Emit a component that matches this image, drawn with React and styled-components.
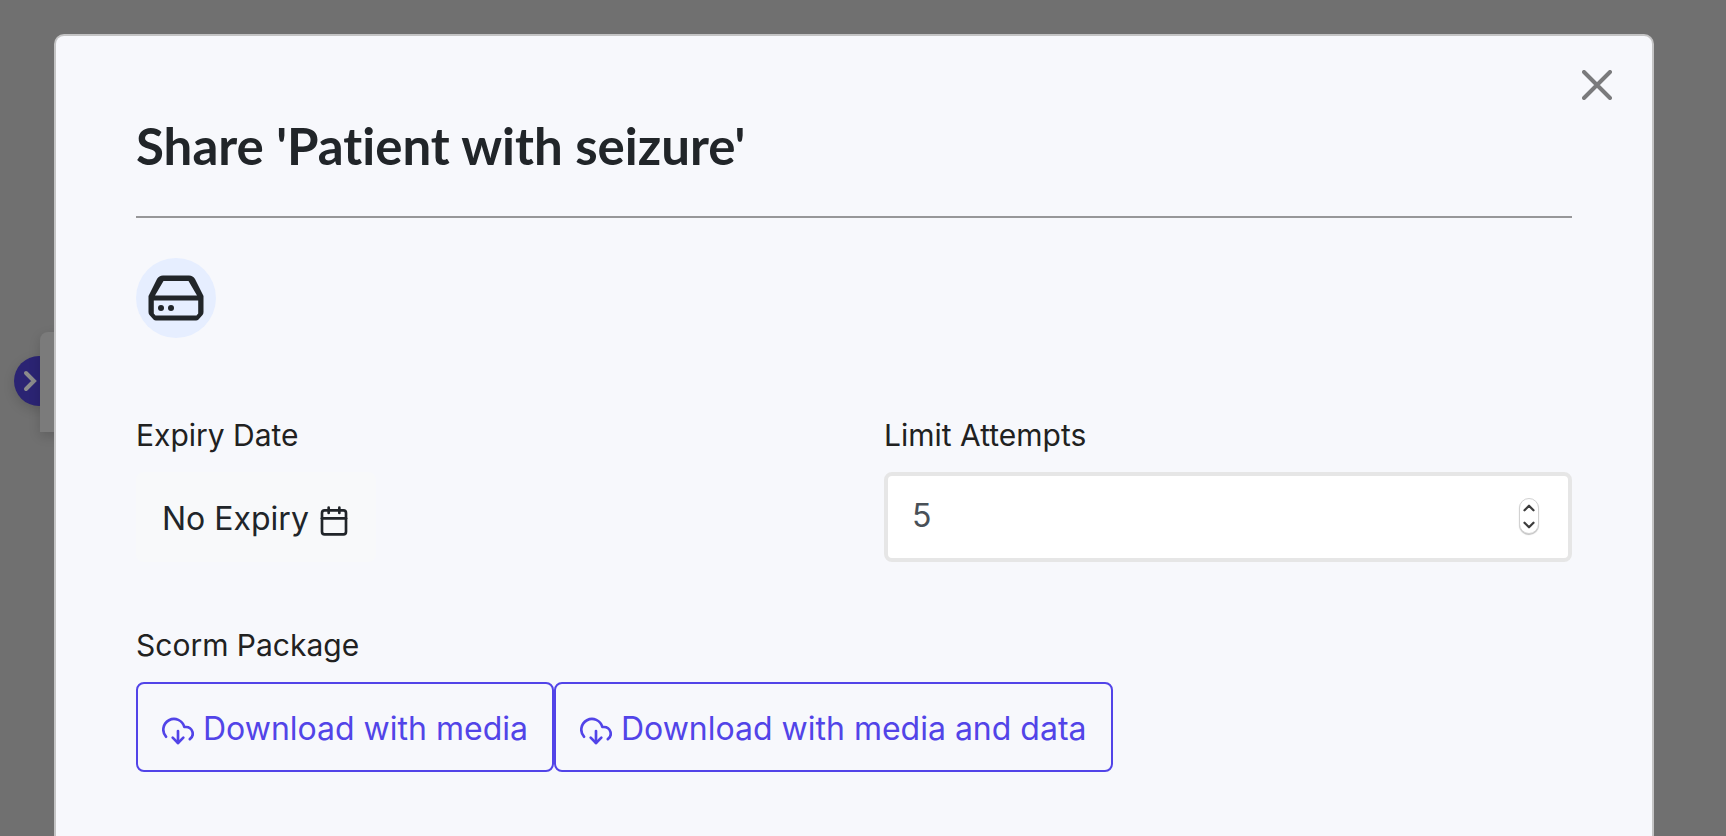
import React, { useState } from "react";
import styled, { createGlobalStyle } from "styled-components";
import { FiCalendar, FiChevronDown, FiChevronUp, FiDownloadCloud } from "react-icons/fi";

const GlobalStyle = createGlobalStyle`
  *, *::before, *::after { box-sizing: border-box; }
  body {
    margin: 0;
    background: #707070;
    color: #212529;
    font-family: Inter, "Liberation Sans", sans-serif;
  }
  button, input { font: inherit; }
`;

const Backdrop = styled.div`
  position: relative;
  min-height: 100vh;
  display: flex;
  padding: 34px 72px 0 54px;
  background: #707070;
  overflow: hidden;
`;

const DrawerToggle = styled.button`
  position: absolute;
  left: 14px;
  top: 356px;
  width: 50px;
  height: 50px;
  display: flex;
  align-items: center;
  padding: 0 0 0 8px;
  border: 0;
  border-radius: 50%;
  background: #2b2473;
  box-shadow: 0 4px 12px rgba(0, 0, 0, 0.15);
`;

const DrawerPanel = styled.div`
  position: absolute;
  left: 40px;
  top: 332px;
  width: 60px;
  height: 100px;
  border-radius: 8px 0 0 0;
  background: #7b7b7b;
  box-shadow: 0 4px 12px rgba(0, 0, 0, 0.15);
`;

const Dialog = styled.main`
  position: relative;
  flex: 1;
  padding: 80px 80px 62px;
  border: 2px solid #c4c4c5;
  border-bottom: 0;
  border-radius: 10px 10px 0 0;
  background: #f7f8fc;
`;

const CloseButton = styled.button`
  position: absolute;
  top: 28px;
  right: 34px;
  width: 42px;
  height: 42px;
  display: grid;
  place-items: center;
  padding: 0;
  border: 0;
  background: none;
  color: #7a7a7c;
`;

const Header = styled.header`
  padding-bottom: 40px;
  border-bottom: 2px solid #979799;
`;

const Title = styled.h1`
  margin: 0;
  font: bold 51px/60px Lato, "Liberation Sans", sans-serif;
  font-variant-ligatures: none;
`;

const DriveBadge = styled.div`
  width: 80px;
  height: 80px;
  margin: 40px 0 76px;
  display: grid;
  place-items: center;
  border-radius: 50%;
  background: #e6eeff;
`;

const Fields = styled.div`
  display: grid;
  grid-template-columns: 1fr 1fr;
  column-gap: 60px;
  row-gap: 62px;
`;

const Field = styled.div`
  grid-column: ${({ $wide }) => ($wide ? "1 / -1" : "auto")};
`;

const labelText = `
  display: block;
  margin-bottom: 16px;
  color: #212121;
  font-size: 30px;
  line-height: 42px;
`;

const Label = styled.label`
  ${labelText}
`;

const GroupLabel = styled.div`
  ${labelText}
`;

const Button = styled.button`
  height: 90px;
  padding: 4px 24px 0;
  border: 2px solid ${({ $outline }) => ($outline ? "#5244e8" : "#f8f9fa")};
  border-radius: 8px;
  background: ${({ $outline }) => ($outline ? "transparent" : "#f8f9fa")};
  color: ${({ $outline }) => ($outline ? "#5244e8" : "#212529")};
  font-size: 32px;
  line-height: 48px;
  white-space: nowrap;

  svg { vertical-align: middle; }
`;

const ButtonRow = styled.div`
  display: flex;
`;

const NumberBox = styled.div`
  height: 90px;
  display: flex;
  align-items: center;
  padding: 0 29px 2px 24px;
  border: 4px solid #e6e6e6;
  border-radius: 8px;
  background: #fff;
`;

const NumberInput = styled.input`
  flex: 1;
  min-width: 0;
  padding: 0;
  border: 0;
  outline: 0;
  background: none;
  color: #495057;
  font-size: 32px;
  line-height: 48px;
  appearance: textfield;

  &::-webkit-inner-spin-button { appearance: none; margin: 0; }
`;

const Stepper = styled.div`
  width: 20px;
  height: 36px;
  display: flex;
  flex-direction: column;
  border: 1px solid #d2d2d2;
  border-radius: 10px;
  background: #fff;
  box-shadow: 0 1px 1px rgba(0, 0, 0, 0.25);
`;

const StepButton = styled.button`
  flex: 1;
  min-height: 0;
  display: flex;
  align-items: center;
  justify-content: center;
  padding: 0;
  border: 0;
  background: none;
  color: #3c3c3c;
`;

export default function App() {
  const [attempts, setAttempts] = useState(5);

  return (
    <>
      <GlobalStyle />
      <Backdrop>
        <DrawerToggle type="button" aria-label="Open panel">
          <svg width="16" height="24" viewBox="0 0 16 24" fill="none" stroke="#8b8b8b" strokeWidth="4" strokeLinecap="round">
            <path d="M4 4l8 8-8 8" />
          </svg>
        </DrawerToggle>
        <DrawerPanel />
        <Dialog role="dialog" aria-labelledby="share-title">
          <CloseButton type="button" aria-label="Close">
            <svg width="30" height="30" viewBox="0 0 30 30" fill="none" stroke="currentColor" strokeWidth="4" strokeLinecap="round">
              <path d="M2 2l26 26M28 2L2 28" />
            </svg>
          </CloseButton>
          <Header>
            <Title id="share-title">Share 'Patient with seizure'</Title>
          </Header>
          <DriveBadge>
            <svg width="60" height="60" viewBox="0 0 60 60" fill="currentColor">
              <path
                fillRule="evenodd"
                d="M17 7.400H43Q47 7.400 49 11L57.500 28V44Q57.500 46 56.500 47L52.500 51.500Q51.500 52.600 50 52.600H10Q8.500 52.600 7.500 51.500L3.500 47Q2.500 46 2.500 44V28L11 11Q13 7.400 17 7.400ZM17.500 13 9 27.500H51L42.500 13ZM7.800 32.500V45.500L9.500 47.500H50.500L52.200 45.500V32.500Z"
              />
              <circle cx="15" cy="40" r="3" />
              <circle cx="25" cy="40" r="3" />
            </svg>
          </DriveBadge>
          <Fields>
            <Field>
              <Label htmlFor="expiry">Expiry Date</Label>
              <Button id="expiry" type="button">
                No Expiry <FiCalendar size={32} />
              </Button>
            </Field>
            <Field>
              <Label htmlFor="attempts">Limit Attempts</Label>
              <NumberBox>
                <NumberInput
                  id="attempts"
                  type="number"
                  min="0"
                  value={attempts}
                  onChange={(e) => setAttempts(Number(e.target.value))}
                />
                <Stepper>
                  <StepButton type="button" aria-label="Increase attempts" onClick={() => setAttempts(attempts + 1)}>
                    <FiChevronUp size={18} strokeWidth={3} />
                  </StepButton>
                  <StepButton type="button" aria-label="Decrease attempts" onClick={() => setAttempts(Math.max(0, attempts - 1))}>
                    <FiChevronDown size={18} strokeWidth={3} />
                  </StepButton>
                </Stepper>
              </NumberBox>
            </Field>
            <Field $wide role="group" aria-labelledby="scorm-label">
              <GroupLabel id="scorm-label">Scorm Package</GroupLabel>
              <ButtonRow>
                <Button type="button" $outline>
                  <FiDownloadCloud size={32} /> Download with media
                </Button>
                <Button type="button" $outline>
                  <FiDownloadCloud size={32} /> Download with media and data
                </Button>
              </ButtonRow>
            </Field>
          </Fields>
        </Dialog>
      </Backdrop>
    </>
  );
}
